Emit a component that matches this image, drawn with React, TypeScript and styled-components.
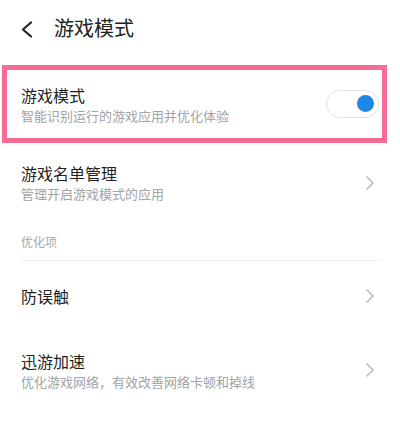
import React, { useState } from 'react';
import styled, { createGlobalStyle } from 'styled-components';

const GlobalStyle = createGlobalStyle`
  html, body {
    margin: 0;
    padding: 0;
    background: #ffffff;
  }
  body {
    font-family: "Noto Sans CJK SC", "Noto Sans", sans-serif;
    -webkit-font-smoothing: antialiased;
  }
`;

const Page = styled.div`
  display: flex;
  flex-direction: column;
  width: 400px;
  height: 423px;
  background: #ffffff;
  overflow: hidden;
`;

const Header = styled.header`
  display: flex;
  align-items: center;
  height: 55px;
  padding: 0 0 0 20px;
  gap: 21px;
`;

const BackButton = styled.button`
  display: flex;
  align-items: center;
  justify-content: center;
  width: 13px;
  height: 18px;
  padding: 0;
  margin-top: 4px;
  border: none;
  background: none;
  cursor: pointer;
`;

const HeaderTitle = styled.h1`
  margin: 0;
  font-size: 20px;
  font-weight: 400;
  line-height: 28px;
  color: #222222;
`;

const Highlight = styled.div`
  margin: 10px 13px 0 2px;
  border: 5px solid #f86c93;
`;

const Row = styled.div<{ $height: number; $padRight?: number }>`
  display: flex;
  align-items: center;
  justify-content: space-between;
  height: ${p => p.$height}px;
  padding: 0 ${p => p.$padRight ?? 26}px 0 ${p => (p.$padRight !== undefined ? 14 : 21)}px;
  cursor: pointer;
`;

const TextBlock = styled.div`
  display: flex;
  flex-direction: column;
`;

const Title = styled.div`
  font-size: 16px;
  line-height: 22px;
  color: #1f1f1f;
`;

const Subtitle = styled.div`
  font-size: 13px;
  line-height: 19px;
  color: #a3a3a3;
`;

const SectionHeader = styled.div`
  display: flex;
  align-items: center;
  height: 38px;
  margin: 0 18px 0 20px;
  padding-left: 1px;
  font-size: 12px;
  color: #a8a8a8;
  border-bottom: 1px solid #f0f0f0;
`;

const Switch = styled.button<{ $on: boolean }>`
  position: relative;
  width: 53px;
  height: 28px;
  padding: 0;
  border: 1.5px solid #e2e2e2;
  border-radius: 14px;
  background: #ffffff;
  cursor: pointer;

  &::after {
    content: '';
    position: absolute;
    top: 4px;
    left: ${p => (p.$on ? '30px' : '4px')};
    width: 17px;
    height: 17px;
    border-radius: 50%;
    background: ${p => (p.$on ? '#1b87e8' : '#cccccc')};
  }
`;

const Chevron = () => (
  <svg width="8" height="14" viewBox="0 0 8 14">
    <path d="M1 1l6 6-6 6" fill="none" stroke="#b3b3b3" strokeWidth="1.4" strokeLinecap="round" strokeLinejoin="round" />
  </svg>
);

const BackIcon = () => (
  <svg width="13" height="17" viewBox="0 0 13 17">
    <path d="M11 1.5L3 8.5l8 7" fill="none" stroke="#222" strokeWidth="2.2" strokeLinecap="round" strokeLinejoin="round" />
  </svg>
);

const App: React.FC = () => {
  const [gameMode, setGameMode] = useState(true);

  return (
    <Page>
      <GlobalStyle />
      <Header>
        <BackButton aria-label="返回">
          <BackIcon />
        </BackButton>
        <HeaderTitle>游戏模式</HeaderTitle>
      </Header>

      <Highlight>
        <Row $height={68} $padRight={3}>
          <TextBlock>
            <Title>游戏模式</Title>
            <Subtitle>智能识别运行的游戏应用并优化体验</Subtitle>
          </TextBlock>
          <Switch $on={gameMode} onClick={() => setGameMode(!gameMode)} aria-label="游戏模式" />
        </Row>
      </Highlight>

      <Row $height={79}>
        <TextBlock>
          <Title>游戏名单管理</Title>
          <Subtitle>管理开启游戏模式的应用</Subtitle>
        </TextBlock>
        <Chevron />
      </Row>

      <SectionHeader>优化项</SectionHeader>

      <Row $height={70}>
        <TextBlock>
          <Title>防误触</Title>
        </TextBlock>
        <Chevron />
      </Row>

      <Row $height={78}>
        <TextBlock>
          <Title>迅游加速</Title>
          <Subtitle>优化游戏网络，有效改善网络卡顿和掉线</Subtitle>
        </TextBlock>
        <Chevron />
      </Row>
    </Page>
  );
};

export default App;
